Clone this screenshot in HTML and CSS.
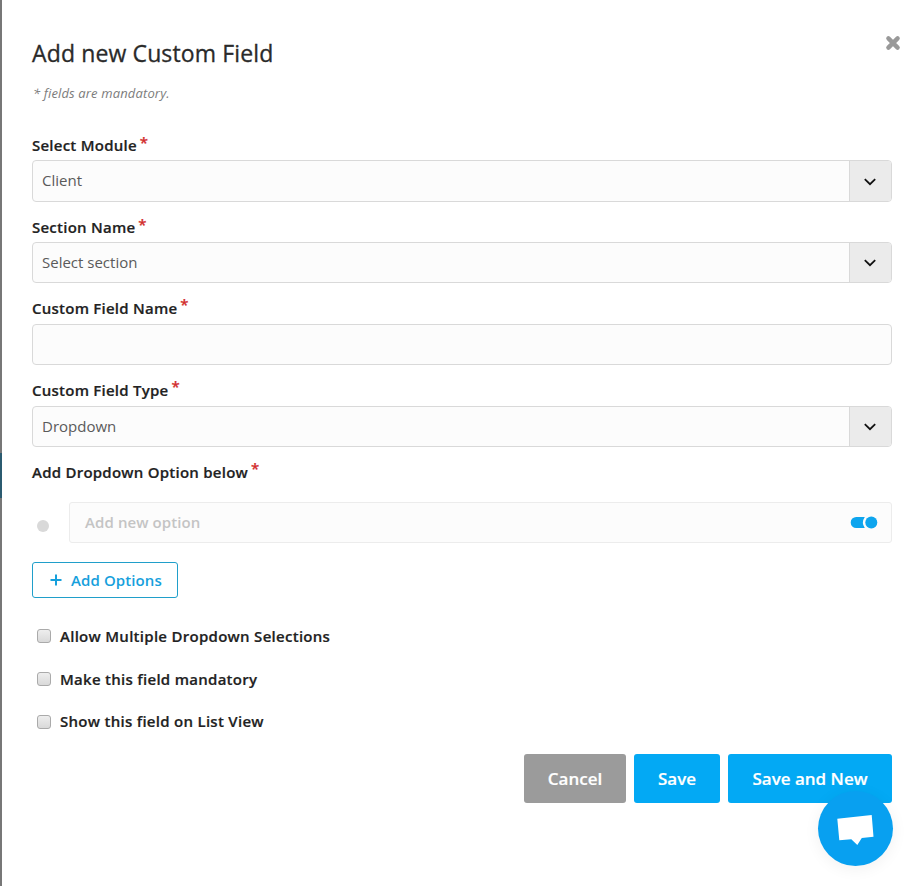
FILE: index.html
```html
<!DOCTYPE html>
<html lang="en">
<head>
<meta charset="utf-8">
<title>Add new Custom Field</title>
<link rel="stylesheet" href="styles.css">
</head>
<body>
<div class="page">
  <div class="backdrop"><div class="backdrop-active"></div></div>
  <main class="panel">
    <header class="head">
      <h1>Add new Custom Field</h1>
      <svg class="close" viewBox="0 0 16 16" width="16" height="16"><path d="M3.4 3.4 12.6 12.6M12.6 3.4 3.4 12.6" fill="none" stroke="#999" stroke-width="4.4" stroke-linecap="round"/></svg>
    </header>
    <p class="note">* fields are mandatory.</p>

    <div class="field">
      <div class="label"><span>Select Module</span><i>*</i></div>
      <div class="control tall"><span>Client</span><b class="arrow"><svg width="12" height="8" viewBox="0 0 12 8"><path d="M.8 1.2 6 6.2 11.2 1.2" fill="none" stroke="#111" stroke-width="1.8"/></svg></b></div>
    </div>
    <div class="field">
      <div class="label"><span>Section Name</span><i>*</i></div>
      <div class="control"><span>Select section</span><b class="arrow"><svg width="12" height="8" viewBox="0 0 12 8"><path d="M.8 1.2 6 6.2 11.2 1.2" fill="none" stroke="#111" stroke-width="1.8"/></svg></b></div>
    </div>
    <div class="field">
      <div class="label raised"><span>Custom Field Name</span><i>*</i></div>
      <div class="control"></div>
    </div>
    <div class="field">
      <div class="label raised"><span>Custom Field Type</span><i>*</i></div>
      <div class="control"><span>Dropdown</span><b class="arrow"><svg width="12" height="8" viewBox="0 0 12 8"><path d="M.8 1.2 6 6.2 11.2 1.2" fill="none" stroke="#111" stroke-width="1.8"/></svg></b></div>
    </div>

    <div class="label raised last"><span>Add Dropdown Option below</span><i>*</i></div>
    <div class="option">
      <div class="dot"></div>
      <div class="option-box"><span>Add new option</span>
        <svg width="28" height="13" viewBox="0 0 28 13"><path d="M6.2 1H14.8Q11 6.5 14.8 12H6.2A5.5 5.5 0 0 1 6.2 1Z" fill="#0ea5ee"/><circle cx="21.3" cy="6.5" r="6" fill="#0ea5ee"/></svg>
      </div>
    </div>
    <div class="add"><svg width="12" height="12" viewBox="0 0 12 12"><path d="M6 .5V11.5M.5 6H11.5" stroke="#16a0dc" stroke-width="2"/></svg><span>Add Options</span></div>

    <div class="checks">
      <label><input type="checkbox"><span>Allow Multiple Dropdown Selections</span></label>
      <label><input type="checkbox"><span>Make this field mandatory</span></label>
      <label><input type="checkbox"><span>Show this field on List View</span></label>
    </div>

    <footer class="actions">
      <div class="btn cancel">Cancel</div>
      <div class="btn save">Save</div>
      <div class="btn save-new">Save and New</div>
    </footer>
  </main>
  <div class="chat"><svg width="75" height="75" viewBox="0 0 75 75"><path d="M19.3 27.7 53.7 24 55.5 45.8 43.8 47 39.3 54 33.3 48.3 21.3 49.3Z" fill="#fff"/></svg></div>
</div>
</body>
</html>
```
FILE: styles.css
```css
* { box-sizing: border-box; }
body { margin: 0; background: #fff; font-family: "Open Sans", sans-serif; font-size: 15px; color: #222; }
.page { display: flex; position: relative; width: 909px; height: 886px; overflow: hidden; }
.backdrop { width: 2px; background: #777; padding-top: 453px; }
.backdrop-active { height: 45px; background: #2b5b70; }
.panel { flex: 1; padding: 32px 17px 0 30px; }
span { white-space: nowrap; }
.head { display: flex; justify-content: space-between; height: 44px; }
h1 { margin: 0; font-size: 23px; font-weight: 400; line-height: 42px; letter-spacing: .13px; color: #2a2a2a; -webkit-text-stroke: .3px #2a2a2a; }
.close { margin: 3px -9px 0 0; }
.note { margin: 7px 0 0 1px; height: 20px; line-height: 20px; font-size: 13px; font-style: italic; letter-spacing: .14px; color: #7c7c7c; }
.field { height: 82px; }
.field:first-of-type { margin-top: 32px; }
.label { display: flex; height: 25px; line-height: 20px; font-weight: 600; letter-spacing: .24px; -webkit-text-stroke: .2px; }
.raised { line-height: 18px; }
.last { height: 24px; }
.label i { margin: -3px 0 0 3px; font-style: normal; color: #d22d2d; font-size: 15px; }
.raised i { margin-top: -4px; }
.control { display: flex; justify-content: space-between; height: 41px; border: 1px solid #d9d9d9; border-radius: 4px; background: #fcfcfc; line-height: 39px; padding-left: 9px; color: #5a5a5a; overflow: hidden; }
.control.tall { height: 42px; }
.arrow { display: flex; width: 42px; padding-right: 1px; align-items: center; justify-content: center; background: #ebebeb; border-left: 1px solid #d9d9d9; }
.arrow svg { margin-top: 1px; }
.option { display: flex; align-items: center; margin-top: 15px; padding-left: 5px; }
.dot { width: 12px; height: 12px; margin-top: 7px; border-radius: 50%; background: #d9d9d9; }
.option-box { display: flex; flex: 1; align-items: center; justify-content: space-between; height: 41px; margin-left: 20px; padding: 0 13px 0 15px; border: 1px solid #ececec; border-radius: 3px; background: #fcfcfc; color: #c4c4c4; font-weight: 600; }
.option-box span { padding-bottom: 2px; letter-spacing: .1px; }
.add { display: flex; align-items: center; width: 146px; height: 36px; margin-top: 19px; padding-left: 17px; border: 1px solid #209fca; border-radius: 3px; color: #16a0dc; font-weight: 600; letter-spacing: .1px; }
.add span { margin-left: 9px; }
.checks { margin-top: 28px; }
.checks label { display: flex; align-items: center; height: 20px; margin-bottom: 22.7px; padding-left: 5px; font-weight: 600; letter-spacing: .28px; -webkit-text-stroke: .2px; }
.checks label:last-child span { padding-bottom: 1px; }
.checks label:last-child input { margin-top: 1px; }
.checks input { appearance: none; width: 14px; height: 14px; margin: 0 9px 0 0; border: 1px solid #aaa; border-radius: 3px; background: linear-gradient(#eee, #d9d9d9); }
.actions { display: flex; justify-content: flex-end; gap: 8px; }
.btn { display: flex; align-items: center; justify-content: center; height: 49px; border-radius: 3px; background: #03a9f4; color: #fff; font-size: 17px; font-weight: 600; -webkit-text-stroke: .2px; }
.cancel { width: 102px; background: #9b9b9b; }
.save { width: 86px; }
.save-new { width: 164px; }
.chat { position: absolute; left: 818px; top: 791px; width: 75px; height: 75px; border-radius: 50%; background: #08a0f0; box-shadow: 0 3px 16px rgba(0, 0, 0, .06); }
```
